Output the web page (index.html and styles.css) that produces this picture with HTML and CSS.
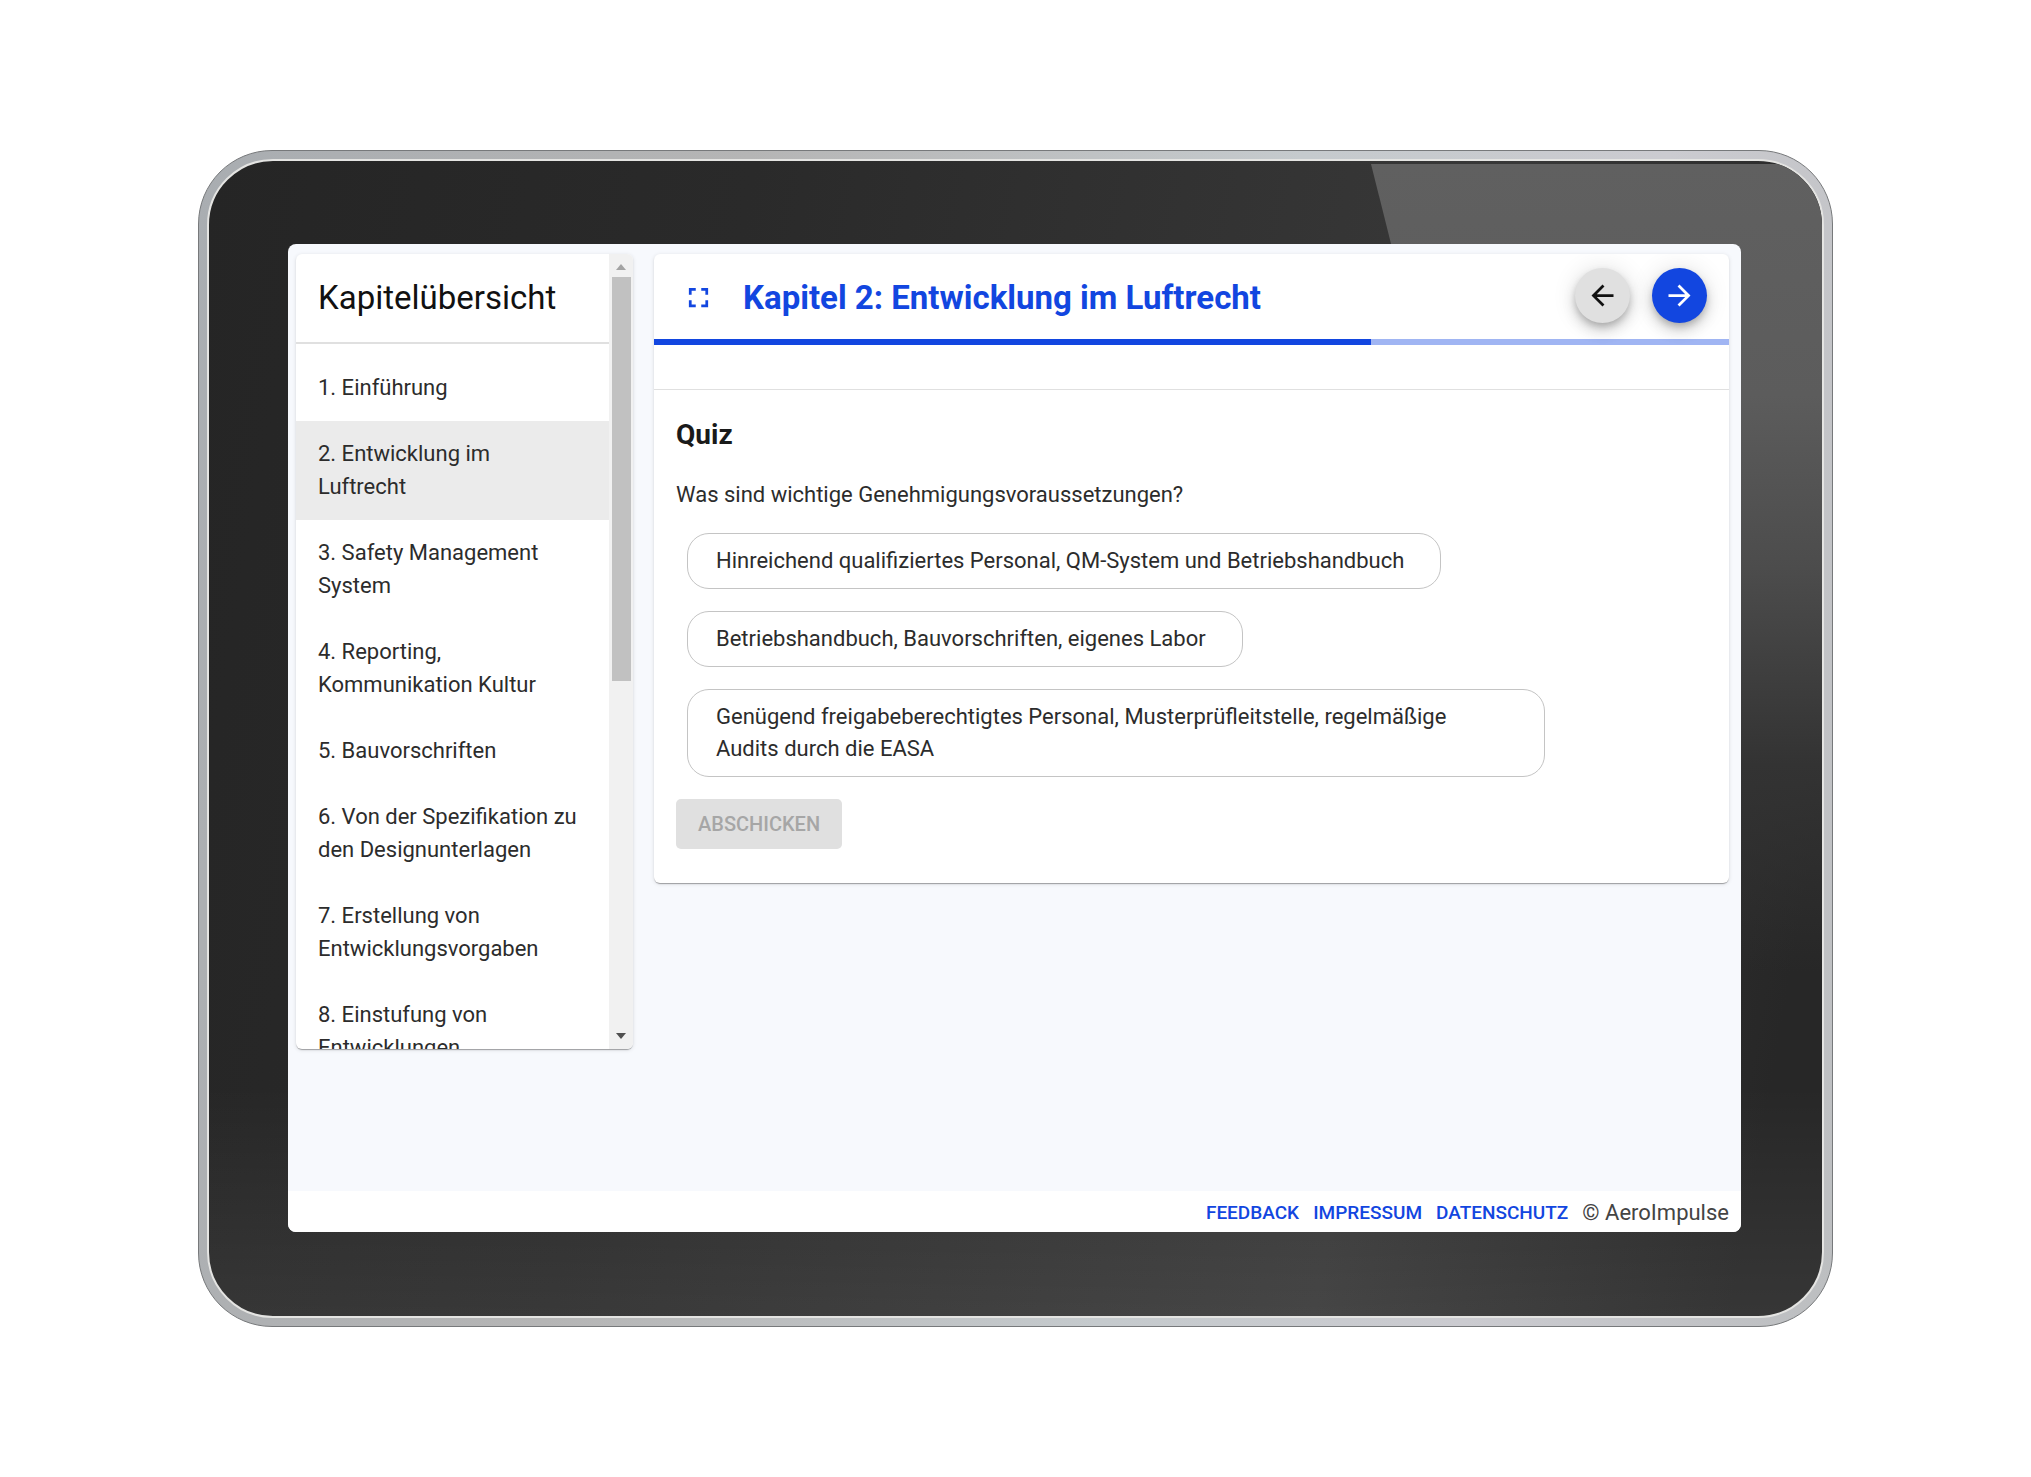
FILE: index.html
```html
<!DOCTYPE html>
<html lang="de">
<head>
    <meta charset="utf-8">
    <meta name="viewport" content="width=device-width, initial-scale=1">
    <title>AeroImpulse - Kapitel 2</title>
    <link rel="stylesheet" href="styles.css">
</head>
<body>
    <div class="tablet">
        <div class="bezel">
            <div class="screen">
                <div class="content">
                    <aside class="sidebar">
                        <div class="chapters">
                            <h2 class="sidebar-title">Kapitelübersicht</h2>
                            <nav class="chapter-list">
                                <a href="#" class="chapter">1. Einführung</a>
                                <a href="#" class="chapter active">2. Entwicklung im Luftrecht</a>
                                <a href="#" class="chapter">3. Safety Management System</a>
                                <a href="#" class="chapter">4. Reporting, Kommunikation Kultur</a>
                                <a href="#" class="chapter">5. Bauvorschriften</a>
                                <a href="#" class="chapter">6. Von der Spezifikation zu den Designunterlagen</a>
                                <a href="#" class="chapter">7. Erstellung von Entwicklungsvorgaben</a>
                                <a href="#" class="chapter">8. Einstufung von Entwicklungen</a>
                            </nav>
                        </div>
                        <div class="scrollbar">
                            <svg class="scroll-arrow up" viewBox="0 0 10 6"><path d="M0 6L5 0l5 6z"/></svg>
                            <div class="scroll-track"><div class="scroll-thumb"></div></div>
                            <svg class="scroll-arrow down" viewBox="0 0 10 6"><path d="M0 0h10L5 6z"/></svg>
                        </div>
                    </aside>

                    <main class="card">
                        <header class="card-header">
                            <button type="button" class="fullscreen-button" aria-label="Vollbild">
                                <svg viewBox="0 0 24 24"><path d="M7 14H5v5h5v-2H7v-3zm-2-4h2V7h3V5H5v5zm12 7h-3v2h5v-5h-2v3zM14 5v2h3v3h2V5h-5z"/></svg>
                            </button>
                            <h1 class="card-title">Kapitel 2: Entwicklung im Luftrecht</h1>
                            <button type="button" class="round-button" aria-label="Zurück">
                                <svg viewBox="0 0 24 24"><path d="M20 11H7.83l5.59-5.59L12 4l-8 8 8 8 1.41-1.41L7.83 13H20v-2z"/></svg>
                            </button>
                            <button type="button" class="round-button primary" aria-label="Weiter">
                                <svg viewBox="0 0 24 24"><path d="M12 4l-1.41 1.41L16.17 11H4v2h12.17l-5.58 5.59L12 20l8-8z"/></svg>
                            </button>
                        </header>
                        <div class="progress"><div class="progress-bar" style="width: 66.7%"></div></div>
                        <div class="spacer"></div>

                        <section class="quiz">
                            <h2 class="quiz-title">Quiz</h2>
                            <p class="question">Was sind wichtige Genehmigungsvoraussetzungen?</p>
                            <div class="answers">
                                <button type="button" class="answer">Hinreichend qualifiziertes Personal, QM-System und Betriebshandbuch</button>
                                <button type="button" class="answer">Betriebshandbuch, Bauvorschriften, eigenes Labor</button>
                                <button type="button" class="answer">Genügend freigabeberechtigtes Personal, Musterprüfleitstelle, regelmäßige Audits durch die EASA</button>
                            </div>
                            <button type="submit" class="submit-button" disabled>ABSCHICKEN</button>
                        </section>
                    </main>
                </div>

                <footer class="footer">
                    <a href="#">FEEDBACK</a>
                    <a href="#">IMPRESSUM</a>
                    <a href="#">DATENSCHUTZ</a>
                    <span class="copyright">© AeroImpulse</span>
                </footer>
            </div>
        </div>
    </div>
</body>
</html>
```
FILE: styles.css
```css
* {
    box-sizing: border-box;
}

body {
    display: flex;
    min-height: 100vh;
    margin: 0;
    padding: 150px 198px;
    background-color: #fff;
    font-family: Roboto, "Liberation Sans", sans-serif;
    font-size: 22px;
    line-height: 33px;
    color: #2c2c2c;
}

h1, h2, p {
    margin: 0;
}

button {
    font-family: inherit;
    cursor: pointer;
}

/* device frame */
.tablet {
    display: flex;
    flex: 1;
    padding: 8px;
    border: 1px solid #77797b;
    border-radius: 74px;
    background: linear-gradient(100deg, #a9adb1, #b5b5b5 30%, #c5cacd 60%, #cbcbd0 80%, #bcbec0);
}

.bezel {
    position: relative;
    display: flex;
    flex: 1;
    padding: 83px 81px 84px 79px;
    border: 2px solid #e4e4e2;
    border-radius: 66px;
    background:
        linear-gradient(transparent 80%, rgba(255, 255, 255, 0.07)),
        linear-gradient(100deg, #252525, #2a2a2a 30%, #383838 72%, #272727 95%);
    overflow: hidden;
}

/* light reflection in the upper right corner */
.bezel::before {
    content: "";
    position: absolute;
    top: 3px;
    right: 0;
    width: 451px;
    height: 100%;
    background: linear-gradient(#606060, #5c5c5c 20%, #4c4c4c 35%, #333 52%, rgba(39, 39, 39, 0) 70%);
    clip-path: polygon(0 0, 100% 0, 100% 100%, 290px 100%);
}

.screen {
    position: relative;
    display: flex;
    flex: 1;
    flex-direction: column;
    border-radius: 8px;
    background-color: #f7f9fd;
    overflow: hidden;
}

.content {
    display: flex;
    flex: 1;
    align-items: flex-start;
    gap: 21px;
    padding: 10px 12px 10px 8px;
}

.sidebar,
.card {
    border-radius: 6px;
    background-color: #fff;
    box-shadow: 0 2px 1px -1px rgba(0, 0, 0, 0.2), 0 1px 1px rgba(0, 0, 0, 0.14), 0 1px 4px rgba(0, 0, 0, 0.12);
    overflow: hidden;
}

/* chapter overview */
.sidebar {
    display: flex;
    flex: 0 0 337px;
    height: 795px;
}

.chapters {
    flex: 1;
    overflow: hidden;
}

.sidebar-title {
    padding: 27px 22px 28px;
    border-bottom: 2px solid #e0e0e0;
    font-size: 33px;
    font-weight: 400;
    color: #111;
}

.chapter-list {
    padding-top: 11px;
}

.chapter {
    display: block;
    padding: 16px 30px 17px 22px;
    color: #2c2c2c;
    text-decoration: none;
}

.chapter.active {
    background-color: #ebebeb;
}

.scrollbar {
    display: flex;
    flex-direction: column;
    align-items: center;
    width: 24px;
    padding: 10px 0;
    background-color: #f1f1f1;
}

.scroll-arrow {
    width: 10px;
    height: 6px;
    fill: #a3a3a3;
}

.scroll-arrow.down {
    fill: #505050;
}

.scroll-track {
    flex: 1;
    width: 19px;
    padding: 7px 0;
}

.scroll-thumb {
    height: 54%;
    background-color: #c1c1c1;
}

/* chapter content */
.card {
    flex: 1;
}

.card-header {
    display: flex;
    align-items: center;
    gap: 22px;
    height: 85px;
    padding: 0 22px;
}

.fullscreen-button {
    display: flex;
    padding: 8px 6px 6px;
    border: none;
    background: none;
}

.fullscreen-button svg,
.round-button svg {
    width: 33px;
    height: 33px;
    fill: #1246e0;
}

.card-title {
    flex: 1;
    padding-top: 2px;
    font-size: 33px;
    font-weight: 700;
    color: #1246e0;
}

.round-button {
    display: flex;
    align-items: center;
    justify-content: center;
    width: 55px;
    height: 55px;
    margin-bottom: 2px;
    padding: 0;
    border: none;
    border-radius: 50%;
    background-color: #e0e0e0;
    box-shadow: 0 4px 7px -1px rgba(0, 0, 0, 0.2), 0 8px 14px rgba(0, 0, 0, 0.14), 0 1px 25px rgba(0, 0, 0, 0.12);
}

.round-button svg {
    fill: #111;
}

.round-button.primary {
    background-color: #1246e0;
}

.round-button.primary svg {
    fill: #fff;
}

.progress {
    height: 6px;
    background-color: #a0b5f3;
}

.progress-bar {
    height: 100%;
    background-color: #1246e0;
}

.spacer {
    height: 45px;
    border-bottom: 1px solid #e0e0e0;
}

.quiz {
    padding: 28px 22px 34px;
}

.quiz-title {
    font-size: 28px;
    font-weight: 700;
    color: #1a1a1a;
}

.question {
    padding: 27px 0 22px;
}

.answers {
    display: flex;
    flex-direction: column;
    align-items: flex-start;
    gap: 22px;
    padding: 0 11px;
}

.answer {
    max-width: 85%;
    padding: 11px 36px 11px 28px;
    border: 1px solid #c4c4c4;
    border-radius: 22px;
    background-color: #fff;
    font-size: 22px;
    line-height: 32px;
    color: #2c2c2c;
    text-align: left;
}

.submit-button {
    height: 50px;
    margin-top: 22px;
    padding: 0 22px;
    border: none;
    border-radius: 5px;
    background-color: #e0e0e0;
    font-size: 20px;
    font-weight: 500;
    color: #a6a6a6;
    cursor: default;
}

.footer {
    display: flex;
    align-items: center;
    justify-content: flex-end;
    gap: 14px;
    height: 41px;
    padding: 2px 12px 0;
    background-color: #fff;
}

.footer a {
    font-size: 19px;
    font-weight: 500;
    color: #1246e0;
    text-decoration: none;
}

.copyright {
    color: #444;
}
```
